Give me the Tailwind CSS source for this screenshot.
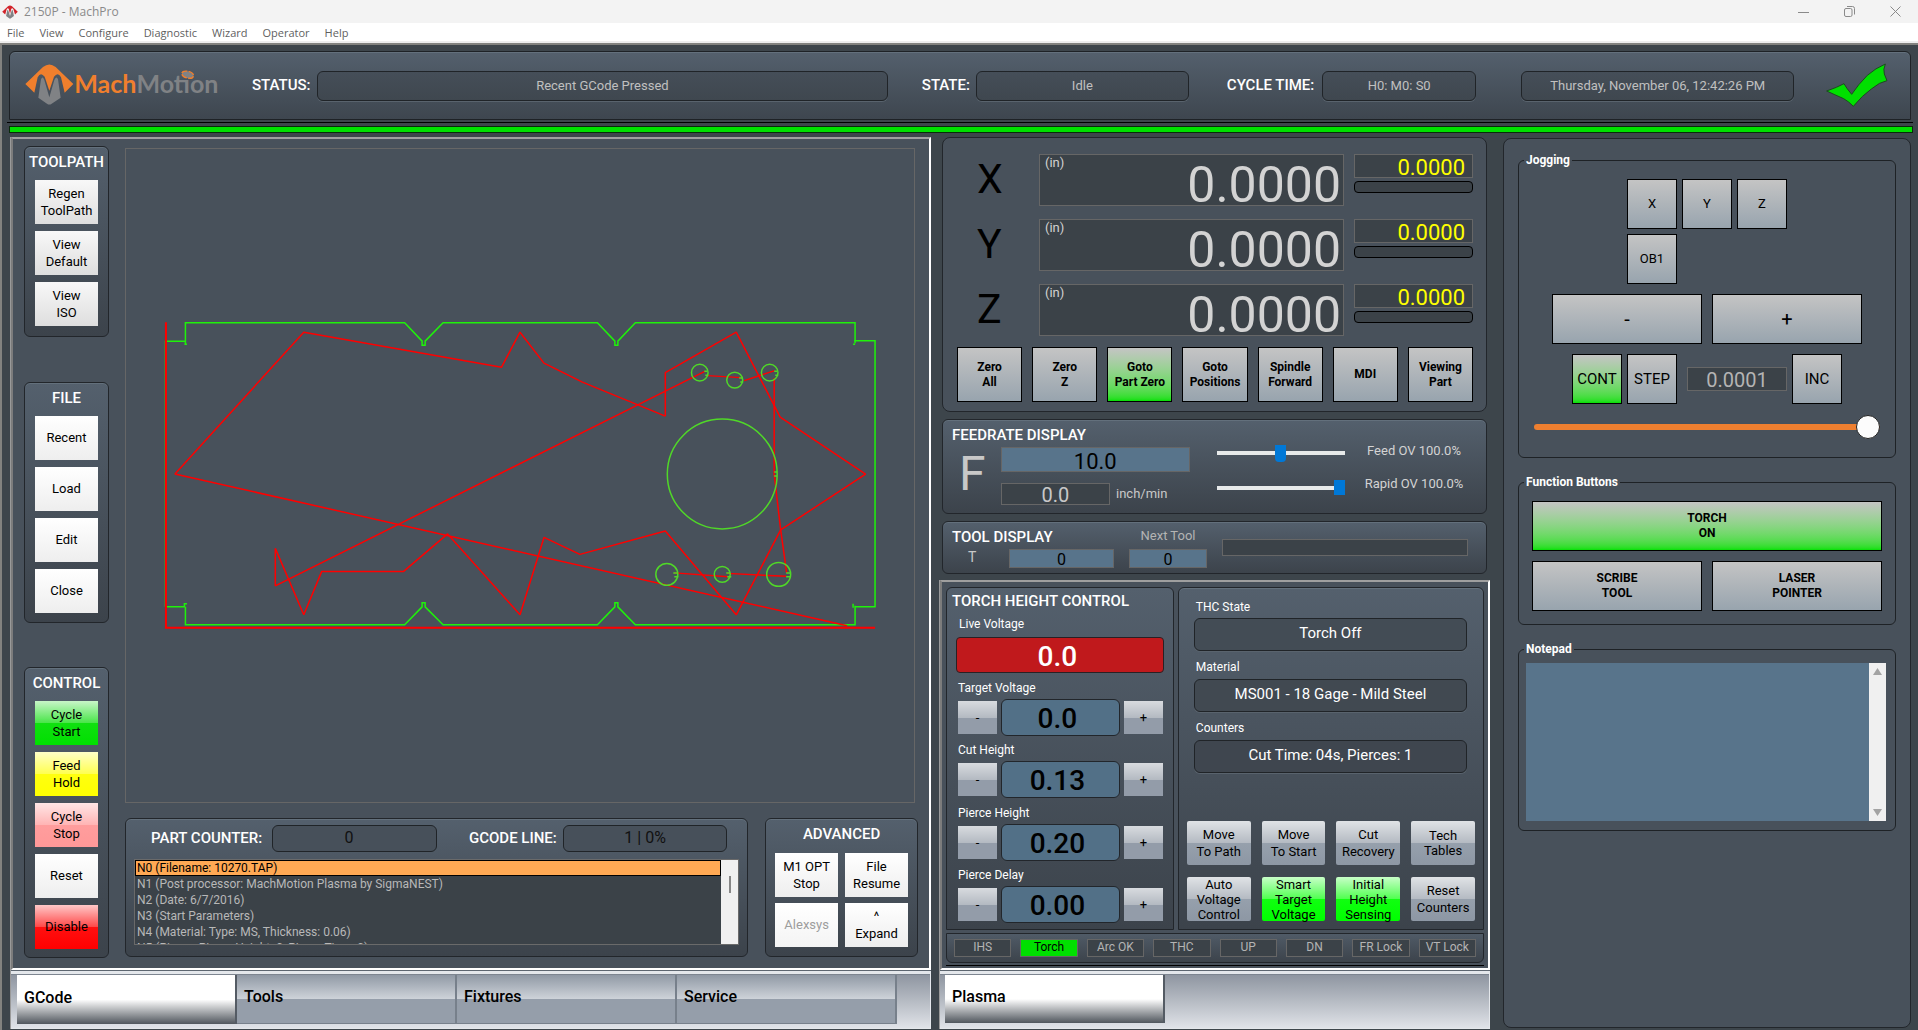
<!DOCTYPE html>
<html lang="en">
<head>
    <meta charset="UTF-8">
    <meta name="viewport" content="width=device-width, initial-scale=1.0">
    <title>2150P - MachPro</title>
    <script src="https://cdn.jsdelivr.net/npm/@tailwindcss/browser@4"></script>
</head>
<body class="min-h-screen flex flex-col bg-[#3d454b] font-[Roboto,sans-serif] text-[13px] text-black">
    <!-- TITLE BAR -->
    <header class="h-[23px] flex items-center justify-between bg-[#f3f3f3] pl-[2px] pr-[17px] font-['Open_Sans',sans-serif] text-xs text-[#8a8a8a]">
        <div class="flex items-center gap-[6px]">
            <svg class="w-4 h-4" viewBox="74 188 150 128">
                <path fill="#d2232a" d="M76 250 L130 199 Q149 184 168 199 L222 250 L196 276 L181 226 Q168 210 160 226 L149 270 L138 226 Q129 210 118 226 L104 276Z"/>
                <path fill="#808285" d="M112 290 L123 238 Q128 226 133 238 L149 290 L165 238 Q170 226 175 238 L186 290 L157 311 Q149 318 141 311Z"/>
            </svg>
            <span>2150P - MachPro</span>
        </div>
        <div class="flex items-center gap-[35px]">
            <button aria-label="Minimize"><svg class="w-[11px] h-[11px]" viewBox="0 0 11 11" stroke="#8a8a8a" fill="none"><path d="M0 6.5H11"/></svg></button>
            <button aria-label="Restore"><svg class="w-[11px] h-[11px]" viewBox="0 0 11 11" stroke="#8a8a8a" fill="none"><rect x=".5" y="2.5" width="7.500" height="8" rx="1.500"/><path d="M3 .5h5.500q2 0 2 2v6"/></svg></button>
            <button aria-label="Close"><svg class="w-[11px] h-[11px]" viewBox="0 0 11 11" stroke="#8a8a8a" fill="none"><path d="M.5 .5l10 10M10.500 .5l-10 10"/></svg></button>
        </div>
    </header>
    <nav class="h-5 flex items-center gap-[15px] bg-white border-b-2 border-[#eeeeee] pt-[2px] pl-[7px] font-['Open_Sans',sans-serif] text-[11px] text-[#5f5f5f]">
        <a href="#">File</a>
        <a href="#">View</a>
        <a href="#">Configure</a>
        <a href="#">Diagnostic</a>
        <a href="#">Wizard</a>
        <a href="#">Operator</a>
        <a href="#">Help</a>
    </nav>

    <div class="flex-1 flex flex-col border-t-2 border-l-2 border-[#82827f] pt-[6px] pb-[3px]">
        <!-- STATUS HEADER -->
        <div class="mx-[7px] h-[69px] flex items-center rounded-t-md border border-[#1e2226] bg-linear-to-b from-[#54606d] to-[#3e464f] pl-[15px] pr-[22px] shadow-[inset_0_1px_0_#63707c]">
            <svg class="w-[197px] h-[45px] shrink-0" viewBox="76 187 591 135">
                <path fill="#f07f2d" d="M77 250 L130 199 Q149 184 168 199 L221 250 L195 276 L184 230 Q175 212 163 228 L149 270 L135 228 Q123 212 114 230 L104 276Z"/>
                <path fill="#808285" d="M116 291 L124 236 Q129 224 134 238 L149 290 L164 238 Q170 224 175 236 L183 291 L156 309 Q149 314 142 309Z"/>
                <text x="224" y="276" font-family="Lato, sans-serif" font-weight="700" font-size="75" fill="#f07f2d">Mach<tspan fill="#808285">Motion</tspan></text>
                <ellipse cx="564" cy="222" rx="18" ry="10" fill="#808285" stroke="#f07f2d" stroke-width="4" stroke-dasharray="18 4" transform="rotate(15 564 222)"/>
            </svg>
            <span class="ml-[30px] w-[65px] text-[15px] font-medium text-white">STATUS:</span>
            <output class="flex-[574] h-[30px] flex items-center justify-center rounded-md border border-[#202428] bg-linear-to-b from-[#454e58] to-[#3f474f] text-[#c0c0c0] shadow-[0_1px_0_#59636d]">Recent GCode Pressed</output>
            <span class="ml-[34px] w-[54px] text-[15px] font-medium text-white">STATE:</span>
            <output class="flex-[213] h-[30px] flex items-center justify-center rounded-md border border-[#202428] bg-linear-to-b from-[#454e58] to-[#3f474f] text-[#c0c0c0] shadow-[0_1px_0_#59636d]">Idle</output>
            <span class="ml-[38px] w-[95px] whitespace-nowrap text-[15px] font-medium text-white">CYCLE TIME:</span>
            <output class="flex-[154] h-[30px] flex items-center justify-center rounded-md border border-[#202428] bg-linear-to-b from-[#454e58] to-[#3f474f] text-[#c0c0c0] shadow-[0_1px_0_#59636d]">H0: M0: S0</output>
            <output class="ml-[45px] flex-[273] h-[30px] flex items-center justify-center rounded-md border border-[#202428] bg-linear-to-b from-[#454e58] to-[#3f474f] text-[#c0c0c0] shadow-[0_1px_0_#59636d]">Thursday, November 06, 12:42:26 PM</output>
            <svg class="ml-8 w-[62px] h-[45px] shrink-0" viewBox="79 27 186 135">
                <path fill="#00e000" stroke="#1d4a20" stroke-width="3" stroke-linejoin="round" d="M81 111 L110 100 L133 89 Q140 102 156 121 Q175 92 203 64 Q228 42 257 30 Q250 46 254 60 L262 80 Q240 84 215 105 Q188 124 161 157 Q148 143 132 134 Q105 122 81 111Z"/>
            </svg>
        </div>
        <div class="mx-[5px] mt-[2px] h-px bg-black"></div>
        <div class="ml-[7px] mr-[5px] mt-[3px] h-[7px] border border-[#0a2a0a] bg-[#00e000]"></div>

        <!-- MAIN -->
        <main class="flex-1 grid grid-cols-[minmax(0,921fr)_minmax(0,559fr)_minmax(0,421fr)] mt-1 pl-2 pr-[7px]">
            <!-- LEFT NOTEBOOK -->
            <section class="flex flex-col border-l border-[#9a9a9a]">
                <div class="flex-1 flex gap-[16px] border-2 border-t-[#9f9f9f] border-l-[#7c7c7c] border-r-white border-b-white bg-[#48515b] pt-[7px] pb-[10px] px-[11px]">
                    <div class="w-[85px] shrink-0 flex flex-col justify-between">
                        <div class="rounded-md border border-[#22262b] bg-linear-to-b from-[#54606d] to-[#3c434b] pb-[10px] shadow-[inset_0_1px_0_#63707c]">
                            <h2 class="h-[33px] leading-[30px] text-center text-[15px] font-medium text-white">TOOLPATH</h2>
                            <div class="flex flex-col gap-[7px] px-[10px]">
                                <button class="h-11 leading-[17px] bg-linear-to-b from-[#f8f8f8] to-[#dedede]">Regen<br>ToolPath</button>
                                <button class="h-11 leading-[17px] bg-linear-to-b from-[#f8f8f8] to-[#dedede]">View<br>Default</button>
                                <button class="h-11 leading-[17px] bg-linear-to-b from-[#f8f8f8] to-[#dedede]">View<br>ISO</button>
                            </div>
                        </div>
                        <div class="rounded-md border border-[#22262b] bg-linear-to-b from-[#54606d] to-[#3c434b] pb-[9px] shadow-[inset_0_1px_0_#63707c]">
                            <h2 class="h-[33px] leading-[30px] text-center text-[15px] font-medium text-white">FILE</h2>
                            <div class="flex flex-col gap-[7px] px-[10px]">
                                <button class="h-11 bg-linear-to-b from-white to-[#eeeeee]">Recent</button>
                                <button class="h-11 bg-linear-to-b from-white to-[#eeeeee]">Load</button>
                                <button class="h-11 bg-linear-to-b from-white to-[#eeeeee]">Edit</button>
                                <button class="h-11 bg-linear-to-b from-white to-[#eeeeee]">Close</button>
                            </div>
                        </div>
                        <div class="rounded-md border border-[#22262b] bg-linear-to-b from-[#54606d] to-[#3c434b] pb-[8px] shadow-[inset_0_1px_0_#63707c]">
                            <h2 class="h-[33px] leading-[30px] text-center text-[15px] font-medium text-white">CONTROL</h2>
                            <div class="flex flex-col gap-[7px] px-[10px]">
                                <button class="h-11 leading-[17px] bg-[linear-gradient(#c8f5c8,#48e548_50%,#10e010_51%,#00e000)]">Cycle<br>Start</button>
                                <button class="h-11 leading-[17px] bg-[linear-gradient(#ffffc8,#ffff50_50%,#ffff10_51%,#ffff00)]">Feed<br>Hold</button>
                                <button class="h-11 leading-[17px] bg-[linear-gradient(#ffe6e6,#ffb4b4_50%,#ff9d9d_51%,#ff9898)]">Cycle<br>Stop</button>
                                <button class="h-11 bg-linear-to-b from-white to-[#eeeeee]">Reset</button>
                                <button class="h-11 bg-[linear-gradient(#ffc8c8,#ff4848_50%,#ff1010_51%,#ff0000)]">Disable</button>
                            </div>
                        </div>
                    </div>

                    <div class="flex-1 min-w-0 flex flex-col gap-[15px] pt-[2px] pb-px">
                        <!-- toolpath view -->
                        <div class="flex-1 min-h-[400px] mr-[3px] flex border border-[#666666]">
                            <svg class="flex-1 w-full" viewBox="126 149 789 653" fill="none">
                                <g stroke="#1ff20a" stroke-width="1.500">
                                    <path d="M165.500 607V341H185.500M187 344H184.500M185.500 344V322.500H405L422.500 341V345H425.500V341L443.500 322.500H598L615.500 341V345H618.500V341L636 322.500H856V343M854 344H856M855 340.500H876V607H856M854 604V608M856 606V625H636L618.500 607V603H615.500V607L598 625H443.500L425.500 607V603H422.500V607L405 625H185.500V607M187 604H184.500V607H166"/>
                                </g>
                                <g stroke="#ff0000" stroke-width="1.500" stroke-linejoin="bevel">
                                    <path d="M848 626L175 474L304 332L502 367L520.500 332L544.500 363L583 382L666 416V372.500L737 332L781 417L866.500 474L781.500 530L737 615L666 531L580.500 554.500L544.500 537.500L520.500 615L448 534L404 571.500H322L304 615L275.500 548.500V586L638 405L706 371"/>
                                    <path d="M708 375.500L742 377.500M745 380.500L775.500 370.500M775 378V474L781.500 530L787.500 573M787 576.500L728 573.500M729 577L675 573"/>
                                </g>
                                <path stroke="#ff0000" stroke-width="2" d="M166 322V628H876"/>
                                <g stroke="#50d828" stroke-width="1.500">
                                    <circle cx="700.500" cy="372.500" r="8.300"/>
                                    <circle cx="735.500" cy="380" r="8"/>
                                    <circle cx="770.500" cy="372.500" r="8.300"/>
                                    <circle cx="723" cy="474" r="55"/>
                                    <circle cx="667.500" cy="574.500" r="11"/>
                                    <circle cx="723" cy="574.500" r="8"/>
                                    <circle cx="779.500" cy="574.500" r="12"/>
                                    <path d="M705 371h3M706 375h3M740 378h3M741 382h3M775 371h3M776 375h3M775 472h3M775 476h3M674 573h4M675 577h4M727 573h4M728 577h4M787 573h4M787 577h4"/>
                                </g>
                            </svg>
                        </div>

                        <div class="grid grid-cols-[minmax(0,624fr)_minmax(0,153fr)] gap-[17px]">
                            <!-- gcode list -->
                            <div class="rounded-md border border-[#22262b] bg-linear-to-b from-[#54606d] to-[#3c434b] pt-[5px] pb-[10px] px-2 shadow-[inset_0_1px_0_#63707c]">
                                <div class="flex items-center pl-[17px] pr-3 h-7">
                                    <span class="w-[121px] whitespace-nowrap text-[15px] font-medium text-white">PART COUNTER:</span>
                                    <output class="w-[165px] h-[27px] pr-[11px] flex items-center justify-center rounded-md border border-[#202428] bg-[#47505a] text-base text-[#111111]">0</output>
                                    <span class="ml-8 w-[94px] whitespace-nowrap text-[15px] font-medium text-white">GCODE LINE:</span>
                                    <output class="flex-1 h-[27px] flex items-center justify-center rounded-md border border-[#202428] bg-[#47505a] text-base text-[#111111]">1 | 0%</output>
                                </div>
                                <div class="mt-[7px] h-[86px] flex border border-[#6a6a6a] bg-[#3b4248]">
                                    <ul class="flex-1 h-[84px] overflow-hidden text-xs leading-4 text-[#b8b8b8]">
                                        <li class="h-4 leading-[15px] px-px border border-black bg-[#ffa954] text-black">N0 (Filename: 10270.TAP)</li>
                                        <li class="px-[2px]">N1 (Post processor: MachMotion Plasma by SigmaNEST)</li>
                                        <li class="px-[2px]">N2 (Date: 6/7/2016)</li>
                                        <li class="px-[2px]">N3 (Start Parameters)</li>
                                        <li class="px-[2px]">N4 (Material: Type: MS, Thickness: 0.06)</li>
                                        <li class="px-[2px]">N5 (Pierce: Pierce Height: 0, Pierce Time: 0)</li>
                                    </ul>
                                    <div class="w-[17px] bg-[#f0f0f0] pt-4"><div class="mx-auto w-[2px] h-[17px] bg-[#868686]"></div></div>
                                </div>
                            </div>
                            <!-- advanced -->
                            <div class="rounded-md border border-[#22262b] bg-linear-to-b from-[#54606d] to-[#3c434b] pb-[9px] shadow-[inset_0_1px_0_#63707c]">
                                <h2 class="h-[34px] leading-[30px] text-center text-[15px] font-medium text-white">ADVANCED</h2>
                                <div class="grid grid-cols-2 gap-x-[7px] gap-y-[6px] px-[9px]">
                                    <button class="h-11 leading-[17px] bg-linear-to-b from-white to-[#eeeeee]">M1 OPT<br>Stop</button>
                                    <button class="h-11 leading-[17px] bg-linear-to-b from-white to-[#eeeeee]">File<br>Resume</button>
                                    <button class="h-11 bg-linear-to-b from-white to-[#f4f4f4] text-[#9d9d9d]" disabled>Alexsys</button>
                                    <button class="h-11 leading-[17px] bg-linear-to-b from-white to-[#eeeeee]">^<br>Expand</button>
                                </div>
                            </div>
                        </div>
                    </div>
                </div>
                <div class="h-[59px] border-t border-[#5d6670] bg-[#e4e7eb] pt-[3px] pb-px pr-px">
                    <div role="tablist" class="h-full flex items-start border-t border-[#7d8590] bg-linear-to-b from-[#8f96a1] to-[#e0e3e8] pl-[6px] text-base font-medium">
                        <button role="tab" aria-selected="true" class="w-[220px] h-[49px] px-[7px] pb-1 text-left border-r-2 border-[#545b64] bg-[linear-gradient(#ffffff,#ffffff_50%,#50565d)]">GCode</button>
                        <button role="tab" class="w-[220px] h-[49px] px-[7px] pb-1 text-left border-r-2 border-b border-[#77808b] bg-[linear-gradient(#9099a5,#ced3d9_50%,#959eaa_51%)]">Tools</button>
                        <button role="tab" class="w-[220px] h-[49px] px-[7px] pb-1 text-left border-r-2 border-b border-[#77808b] bg-[linear-gradient(#9099a5,#ced3d9_50%,#959eaa_51%)]">Fixtures</button>
                        <button role="tab" class="w-[220px] h-[49px] px-[7px] pb-1 text-left border-r-2 border-b border-[#77808b] bg-[linear-gradient(#9099a5,#ced3d9_50%,#959eaa_51%)]">Service</button>
                    </div>
                </div>
            </section>

            <!-- MIDDLE COLUMN -->
            <section class="ml-2 flex flex-col">
                <!-- DRO -->
                <div class="mx-[3px] rounded-lg border border-[#22262b] bg-[#48515b] pt-4 pb-[9px] pl-[14px] pr-[13px]">
                    <div class="flex flex-col gap-[13px]">
                        <div class="h-[52px] grid grid-cols-[72fr_305fr_119fr] gap-[10px]">
                            <div class="pl-5 text-[41px] leading-[50px]">X</div>
                            <div class="flex justify-between border border-[#666666] bg-[#3b4248] pl-[5px] pr-[2px] text-[#d3d3d3]"><span class="leading-4">(in)</span><output class="text-[50px] leading-[60px] h-[50px]">0.0000</output></div>
                            <div class="flex flex-col gap-[3px]">
                                <output class="h-6 pr-[7px] text-right text-[22px] leading-[25px] text-[#ffff00] border border-[#666666] bg-[#3b4248]">0.0000</output>
                                <div class="h-3 rounded border border-black bg-[#3b4248]"></div>
                            </div>
                        </div>
                        <div class="h-[52px] grid grid-cols-[72fr_305fr_119fr] gap-[10px]">
                            <div class="pl-5 text-[41px] leading-[50px]">Y</div>
                            <div class="flex justify-between border border-[#666666] bg-[#3b4248] pl-[5px] pr-[2px] text-[#d3d3d3]"><span class="leading-4">(in)</span><output class="text-[50px] leading-[60px] h-[50px]">0.0000</output></div>
                            <div class="flex flex-col gap-[3px]">
                                <output class="h-6 pr-[7px] text-right text-[22px] leading-[25px] text-[#ffff00] border border-[#666666] bg-[#3b4248]">0.0000</output>
                                <div class="h-3 rounded border border-black bg-[#3b4248]"></div>
                            </div>
                        </div>
                        <div class="h-[52px] grid grid-cols-[72fr_305fr_119fr] gap-[10px]">
                            <div class="pl-5 text-[41px] leading-[50px]">Z</div>
                            <div class="flex justify-between border border-[#666666] bg-[#3b4248] pl-[5px] pr-[2px] text-[#d3d3d3]"><span class="leading-4">(in)</span><output class="text-[50px] leading-[60px] h-[50px]">0.0000</output></div>
                            <div class="flex flex-col gap-[3px]">
                                <output class="h-6 pr-[7px] text-right text-[22px] leading-[25px] text-[#ffff00] border border-[#666666] bg-[#3b4248]">0.0000</output>
                                <div class="h-3 rounded border border-black bg-[#3b4248]"></div>
                            </div>
                        </div>
                    </div>
                    <div class="mt-[11px] grid grid-cols-7 gap-[10px] leading-[15px] font-bold text-xs">
                        <button class="h-[55px] border border-black bg-linear-to-b from-[#c4c4c4] to-[#98a4ae]">Zero<br>All</button>
                        <button class="h-[55px] border border-black bg-linear-to-b from-[#c4c4c4] to-[#98a4ae]">Zero<br>Z</button>
                        <button class="h-[55px] border border-black bg-linear-to-b from-[#c4c4c4] to-[#00e000] whitespace-nowrap">Goto<br>Part Zero</button>
                        <button class="h-[55px] border border-black bg-linear-to-b from-[#c4c4c4] to-[#98a4ae]">Goto<br>Positions</button>
                        <button class="h-[55px] border border-black bg-linear-to-b from-[#c4c4c4] to-[#98a4ae]">Spindle<br>Forward</button>
                        <button class="h-[55px] border border-black bg-linear-to-b from-[#c4c4c4] to-[#98a4ae]">MDI</button>
                        <button class="h-[55px] border border-black bg-linear-to-b from-[#c4c4c4] to-[#98a4ae]">Viewing<br>Part</button>
                    </div>
                </div>

                <!-- FEEDRATE -->
                <div class="mx-[3px] mt-[7px] h-[95px] rounded-md border border-[#22262b] bg-linear-to-b from-[#54606d] to-[#3c434b] pt-[6px] px-[9px] shadow-[inset_0_1px_0_#63707c]">
                    <h2 class="h-[21px] leading-[19px] text-[15px] font-medium text-white">FEEDRATE DISPLAY</h2>
                    <div class="flex">
                        <div class="w-[49px] pl-[7px] text-[48px] leading-[54px] text-[#c8c8c8]">F</div>
                        <div class="flex-[188]">
                            <input aria-label="Feedrate" value="10.0" class="block w-full h-[25px] pt-[3px] text-center text-[22px] border border-[#666666] bg-[#58748b]">
                            <div class="mt-[11px] flex items-center gap-[6px] text-[#c8c8c8]">
                                <output class="w-[109px] h-[22px] text-center text-[20px] leading-[23px] border border-[#666666] bg-[#3b4248]">0.0</output>
                                <span>inch/min</span>
                            </div>
                        </div>
                        <div class="flex-[128] ml-[27px] flex flex-col">
                            <input type="range" id="feed" value="50" class="block w-full h-[18px] mt-[-3px] appearance-none bg-transparent [&::-webkit-slider-runnable-track]:h-1 [&::-webkit-slider-runnable-track]:bg-[#e7eaea] [&::-webkit-slider-thumb]:appearance-none [&::-webkit-slider-thumb]:w-[11px] [&::-webkit-slider-thumb]:h-[17px] [&::-webkit-slider-thumb]:mt-[-6px] [&::-webkit-slider-thumb]:bg-[#0078d7] [&::-webkit-slider-thumb]:rounded-b">
                            <input type="range" id="rapid" value="100" class="block w-full h-[18px] mt-[17px] appearance-none bg-transparent [&::-webkit-slider-runnable-track]:h-1 [&::-webkit-slider-runnable-track]:bg-[#e7eaea] [&::-webkit-slider-thumb]:appearance-none [&::-webkit-slider-thumb]:w-[11px] [&::-webkit-slider-thumb]:h-[15px] [&::-webkit-slider-thumb]:mt-[-6px] [&::-webkit-slider-thumb]:bg-[#0078d7]">
                        </div>
                        <div class="w-[126px] ml-[6px] flex flex-col gap-[17px] text-center leading-4 text-[#d3d3d3]">
                            <label for="feed" class="mt-[-4px]">Feed OV 100.0%</label>
                            <label for="rapid">Rapid OV 100.0%</label>
                        </div>
                    </div>
                </div>

                <!-- TOOL -->
                <div class="mx-[3px] mt-[7px] h-[53px] grid grid-cols-[minmax(0,162fr)_minmax(0,78fr)_minmax(0,246fr)] gap-[15px] rounded-md border border-[#22262b] bg-linear-to-b from-[#54606d] to-[#3c434b] pl-[9px] pr-[18px] shadow-[inset_0_1px_0_#63707c]">
                    <div>
                        <h2 class="h-[27px] leading-[30px] text-[15px] font-medium text-white">TOOL DISPLAY</h2>
                        <div class="flex">
                            <label for="tool" class="w-[57px] pl-4 leading-4 text-sm text-[#c8c8c8]">T</label>
                            <input id="tool" value="0" class="flex-1 min-w-0 h-[19px] pt-[2px] text-center text-base border border-[#666666] bg-[#58748b]">
                        </div>
                    </div>
                    <div>
                        <label for="nexttool" class="block h-[27px] leading-[28px] text-center text-[#b4b4b4]">Next Tool</label>
                        <input id="nexttool" value="0" class="block w-full h-[19px] pt-[2px] text-center text-base border border-[#666666] bg-[#58748b]">
                    </div>
                    <div class="mt-[17px] h-[17px] border border-[#666666] bg-[#3b4248]"></div>
                </div>

                <!-- PLASMA NOTEBOOK -->
                <div class="mt-[6px] flex-1 flex flex-col border-l border-[#9a9a9a]">
                    <div class="flex-1 flex flex-col border-2 border-t-[#9f9f9f] border-l-[#7c7c7c] border-r-white border-b-white bg-[#48515b] pt-[5px] pb-[2px] px-[4px]">
                        <div class="flex-1 grid grid-cols-[minmax(0,227fr)_minmax(0,305fr)] gap-[4px]">
                            <div class="rounded-t-md border border-[#22262b] bg-linear-to-b from-[#54606d] to-[#3c434b] px-[9px] pb-[6px]">
                                <h2 class="ml-[-4px] h-[28px] leading-[26px] whitespace-nowrap text-[15px] font-medium text-white">TORCH HEIGHT CONTROL</h2>
                                <p class="h-[21px] pl-[3px] leading-4 text-xs text-white">Live Voltage</p>
                                <output class="h-9 pt-[3px] pr-[5px] flex items-center justify-center rounded border border-[#2a2024] bg-[#c0191c] text-[28px] font-medium text-white">0.0</output>
                                <label for="tv" class="block mt-[6px] h-[20px] pl-[2px] leading-[18px] text-xs text-white">Target Voltage</label>
                                <div class="flex items-center gap-[4px] pl-[2px] pr-px">
                                    <button aria-label="Target Voltage down" class="w-[39px] h-[33px] bg-[linear-gradient(#d8dbdf,#b4bac2_50%,#939ca9_51%)]">-</button>
                                    <input id="tv" value="0.0" class="flex-1 min-w-0 h-[37px] pt-[3px] pr-[6px] text-center text-[28px] font-medium rounded-md border border-[#22262b] bg-[#527087]">
                                    <button aria-label="Target Voltage up" class="w-[39px] h-[33px] bg-[linear-gradient(#d8dbdf,#b4bac2_50%,#939ca9_51%)]">+</button>
                                </div>
                                <label for="ch" class="block mt-[5px] h-[20px] pl-[2px] leading-[18px] text-xs text-white">Cut Height</label>
                                <div class="flex items-center gap-[4px] pl-[2px] pr-px">
                                    <button aria-label="Cut Height down" class="w-[39px] h-[33px] bg-[linear-gradient(#d8dbdf,#b4bac2_50%,#939ca9_51%)]">-</button>
                                    <input id="ch" value="0.13" class="flex-1 min-w-0 h-[37px] pt-[3px] pr-[6px] text-center text-[28px] font-medium rounded-md border border-[#22262b] bg-[#527087]">
                                    <button aria-label="Cut Height up" class="w-[39px] h-[33px] bg-[linear-gradient(#d8dbdf,#b4bac2_50%,#939ca9_51%)]">+</button>
                                </div>
                                <label for="ph" class="block mt-[6px] h-[20px] pl-[2px] leading-[18px] text-xs text-white">Pierce Height</label>
                                <div class="flex items-center gap-[4px] pl-[2px] pr-px">
                                    <button aria-label="Pierce Height down" class="w-[39px] h-[33px] bg-[linear-gradient(#d8dbdf,#b4bac2_50%,#939ca9_51%)]">-</button>
                                    <input id="ph" value="0.20" class="flex-1 min-w-0 h-[37px] pt-[3px] pr-[6px] text-center text-[28px] font-medium rounded-md border border-[#22262b] bg-[#527087]">
                                    <button aria-label="Pierce Height up" class="w-[39px] h-[33px] bg-[linear-gradient(#d8dbdf,#b4bac2_50%,#939ca9_51%)]">+</button>
                                </div>
                                <label for="pd" class="block mt-[5px] h-[20px] pl-[2px] leading-[18px] text-xs text-white">Pierce Delay</label>
                                <div class="flex items-center gap-[4px] pl-[2px] pr-px">
                                    <button aria-label="Pierce Delay down" class="w-[39px] h-[33px] bg-[linear-gradient(#d8dbdf,#b4bac2_50%,#939ca9_51%)]">-</button>
                                    <input id="pd" value="0.00" class="flex-1 min-w-0 h-[37px] pt-[3px] pr-[6px] text-center text-[28px] font-medium rounded-md border border-[#22262b] bg-[#527087]">
                                    <button aria-label="Pierce Delay up" class="w-[39px] h-[33px] bg-[linear-gradient(#d8dbdf,#b4bac2_50%,#939ca9_51%)]">+</button>
                                </div>
                            </div>
                            <div class="flex flex-col rounded-t-md border border-[#22262b] bg-linear-to-b from-[#54606d] to-[#3c434b] px-[8px] pb-2 shadow-[inset_0_1px_0_#63707c]">
                                <div class="flex flex-col pl-[7px] pr-[8px] text-white">
                                    <span class="mt-[10px] h-[20px] pl-[2px] text-xs leading-[18px]">THC State</span>
                                    <output class="h-[33px] pb-[2px] flex items-center justify-center rounded-md border border-[#202428] bg-[#434c55] text-[15px] shadow-[0_1px_0_#59636d]">Torch Off</output>
                                    <span class="mt-[7px] h-[21px] pl-[2px] text-xs leading-[18px]">Material</span>
                                    <output class="h-[33px] pb-[2px] flex items-center justify-center rounded-md border border-[#202428] bg-[#414951] text-[15px] shadow-[0_1px_0_#59636d]">MS001 - 18 Gage - Mild Steel</output>
                                    <span class="mt-[7px] h-[21px] pl-[2px] text-xs leading-[18px]">Counters</span>
                                    <output class="h-[33px] pb-[2px] flex items-center justify-center rounded-md border border-[#202428] bg-[#3f464f] text-[15px] shadow-[0_1px_0_#59636d]">Cut Time: 04s, Pierces: 1</output>
                                </div>
                                <div class="mt-auto grid grid-cols-4 gap-x-[11px] gap-y-3 leading-[17px]">
                                    <button class="h-11 rounded-xs bg-[linear-gradient(#e0e3e6,#b4bac2_50%,#96a0ac_51%,#8d97a4)]">Move<br>To Path</button>
                                    <button class="h-11 rounded-xs bg-[linear-gradient(#e0e3e6,#b4bac2_50%,#96a0ac_51%,#8d97a4)]">Move<br>To Start</button>
                                    <button class="h-11 rounded-xs bg-[linear-gradient(#e0e3e6,#b4bac2_50%,#96a0ac_51%,#8d97a4)]">Cut<br>Recovery</button>
                                    <button class="h-11 leading-[15px] rounded-xs bg-[linear-gradient(#e0e3e6,#b4bac2_50%,#96a0ac_51%,#8d97a4)]">Tech<br>Tables</button>
                                    <button class="h-11 leading-[15px] rounded-xs bg-[linear-gradient(#e0e3e6,#b4bac2_50%,#96a0ac_51%,#8d97a4)]">Auto<br>Voltage<br>Control</button>
                                    <button class="h-11 leading-[15px] rounded-xs bg-[linear-gradient(#c8ffc8,#50ff50_50%,#10ff10_51%,#00ff00)]">Smart<br>Target<br>Voltage</button>
                                    <button class="h-11 leading-[15px] rounded-xs bg-[linear-gradient(#c8ffc8,#50ff50_50%,#10ff10_51%,#00ff00)]">Initial<br>Height<br>Sensing</button>
                                    <button class="h-11 rounded-xs bg-[linear-gradient(#e0e3e6,#b4bac2_50%,#96a0ac_51%,#8d97a4)]">Reset<br>Counters</button>
                                </div>
                            </div>
                        </div>
                        <div class="mt-[3px] grid grid-cols-8 gap-[9px] rounded-b-md border border-[#22262b] bg-linear-to-b from-[#505b67] to-[#3c434b] pt-[5px] pb-[5px] px-[7px] text-center text-xs leading-[14px] text-[#b4b4b4] whitespace-nowrap">
                            <span class="h-[18px] border border-[#666666] bg-[#3b4248]">IHS</span>
                            <span class="h-[18px] border border-[#666666] bg-[#00e000] text-black">Torch</span>
                            <span class="h-[18px] border border-[#666666] bg-[#3b4248]">Arc OK</span>
                            <span class="h-[18px] border border-[#666666] bg-[#3b4248]">THC</span>
                            <span class="h-[18px] border border-[#666666] bg-[#3b4248]">UP</span>
                            <span class="h-[18px] border border-[#666666] bg-[#3b4248]">DN</span>
                            <span class="h-[18px] border border-[#666666] bg-[#3b4248]">FR Lock</span>
                            <span class="h-[18px] border border-[#666666] bg-[#3b4248]">VT Lock</span>
                        </div>
                        <div class="mt-[2px] h-px bg-black"></div>
                    </div>
                    <div class="h-[59px] border-t border-[#5d6670] bg-[#e4e7eb] pt-[3px] pb-px pr-px">
                        <div role="tablist" class="h-full flex items-start border-t border-[#7d8590] bg-linear-to-b from-[#8f96a1] to-[#e0e3e8] pl-[5px] text-base font-medium">
                            <button role="tab" aria-selected="true" class="w-[220px] h-[48px] px-[7px] pb-1 text-left border-r-2 border-[#545b64] bg-[linear-gradient(#ffffff,#ffffff_50%,#50565d)]">Plasma</button>
                        </div>
                    </div>
                </div>
            </section>

            <!-- RIGHT PANEL -->
            <section class="ml-[13px] mt-px mb-px flex flex-col gap-4 rounded-lg border border-[#22262b] bg-[#48515b] pt-[13px] px-[14px]">
                <fieldset class="rounded-md border border-[#1e2226]">
                    <legend class="ml-[5px] px-[2px] leading-4 text-xs font-bold text-white">Jogging</legend>
                    <div class="mt-[11px] mb-[18px] px-[15px] flex flex-col items-center gap-[10px]">
                        <div class="grid grid-cols-3 gap-[5px]">
                            <button class="size-[50px] border border-black bg-linear-to-b from-[#c4c4c4] to-[#98a4ae]">X</button>
                            <button class="size-[50px] border border-black bg-linear-to-b from-[#c4c4c4] to-[#98a4ae]">Y</button>
                            <button class="size-[50px] border border-black bg-linear-to-b from-[#c4c4c4] to-[#98a4ae]">Z</button>
                            <button class="size-[50px] border border-black bg-linear-to-b from-[#c4c4c4] to-[#98a4ae]">OB1</button>
                        </div>
                        <div class="flex gap-[10px] text-xl">
                            <button class="w-[150px] h-[50px] border border-black bg-linear-to-b from-[#c4c4c4] to-[#98a4ae]">-</button>
                            <button class="w-[150px] h-[50px] border border-black bg-linear-to-b from-[#c4c4c4] to-[#98a4ae]">+</button>
                        </div>
                        <div class="flex items-center text-[15px]">
                            <button class="size-[50px] border border-black bg-linear-to-b from-[#c4c4c4] to-[#00e000]">CONT</button>
                            <button class="size-[50px] ml-[5px] border border-black bg-linear-to-b from-[#c4c4c4] to-[#98a4ae]">STEP</button>
                            <output class="w-[100px] h-6 ml-[10px] mr-[5px] text-center text-[20px] leading-6 text-[#b4b4b4] border border-[#666666] bg-[#3b4248]">0.0001</output>
                            <button class="size-[50px] border border-black bg-linear-to-b from-[#c4c4c4] to-[#98a4ae]">INC</button>
                        </div>
                        <input type="range" aria-label="Jog rate" value="100" class="w-full h-[25px] appearance-none bg-transparent [&::-webkit-slider-runnable-track]:h-[6px] [&::-webkit-slider-runnable-track]:rounded-full [&::-webkit-slider-runnable-track]:bg-[#ee7f30] [&::-webkit-slider-thumb]:appearance-none [&::-webkit-slider-thumb]:size-6 [&::-webkit-slider-thumb]:mt-[-9px] [&::-webkit-slider-thumb]:rounded-full [&::-webkit-slider-thumb]:border [&::-webkit-slider-thumb]:border-[#222222] [&::-webkit-slider-thumb]:bg-[#fcfcfc]">
                    </div>
                </fieldset>
                <fieldset class="rounded-md border border-[#1e2226]">
                    <legend class="ml-[5px] px-[2px] leading-4 text-xs font-bold text-white">Function Buttons</legend>
                    <div class="mt-[11px] mb-[13px] px-[13px] grid grid-cols-2 gap-[10px] text-xs leading-[15px] font-bold">
                        <button class="col-span-2 h-[50px] border border-black bg-linear-to-b from-[#c4c4c4] to-[#00e000]">TORCH<br>ON</button>
                        <button class="h-[50px] border border-black bg-linear-to-b from-[#c4c4c4] to-[#98a4ae]">SCRIBE<br>TOOL</button>
                        <button class="h-[50px] border border-black bg-linear-to-b from-[#c4c4c4] to-[#98a4ae]">LASER<br>POINTER</button>
                    </div>
                </fieldset>
                <fieldset class="rounded-md border border-[#1e2226]">
                    <legend class="ml-[5px] px-[2px] leading-4 text-xs font-bold text-white">Notepad</legend>
                    <div class="mt-[6px] mb-[9px] ml-[7px] mr-[9px] h-[158px] flex">
                        <textarea aria-label="Notepad" class="flex-1 min-w-0 resize-none bg-[#58748b] p-1"></textarea>
                        <div class="w-[17px] flex flex-col items-center justify-between bg-[#f0f0f0] py-[5px]">
                            <svg class="w-[9px] h-[7px]" viewBox="0 0 9 7" fill="#a3a3a3"><path d="M4.500 0L9 7H0Z"/></svg>
                            <svg class="w-[9px] h-[7px]" viewBox="0 0 9 7" fill="#a3a3a3"><path d="M4.500 7L9 0H0Z"/></svg>
                        </div>
                    </div>
                </fieldset>
            </section>
        </main>
    </div>
</body>
</html>
